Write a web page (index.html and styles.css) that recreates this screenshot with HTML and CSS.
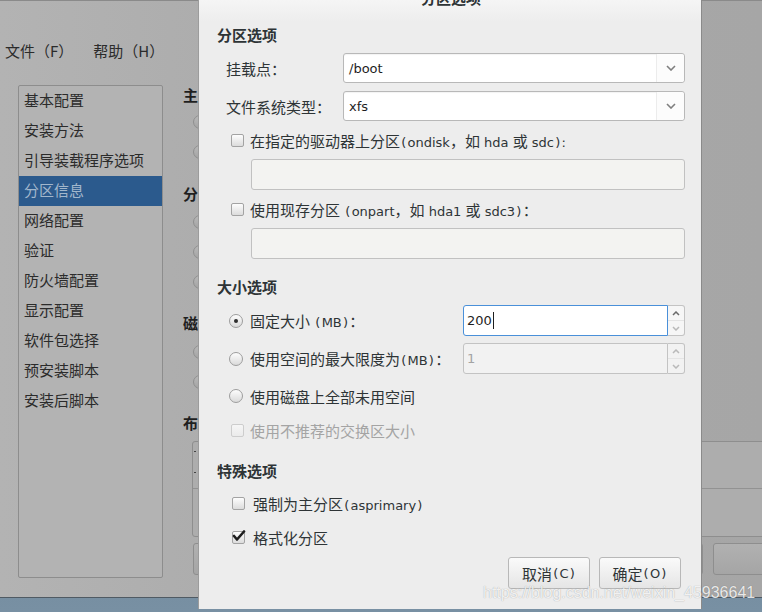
FILE: index.html
```html
<!DOCTYPE html>
<html>
<head>
<meta charset="utf-8">
<link rel="stylesheet" href="styles.css">
</head>
<body>
<div class="screen">
  <div class="win">
    <div class="menubar">
      <span class="zh">文件（F）</span>
      <span class="zh">帮助（H）</span>
    </div>
    <div class="wbody">
      <ul class="side zh">
        <li>基本配置</li>
        <li>安装方法</li>
        <li>引导装载程序选项</li>
        <li class="sel">分区信息</li>
        <li>网络配置</li>
        <li>验证</li>
        <li>防火墙配置</li>
        <li>显示配置</li>
        <li>软件包选择</li>
        <li>预安装脚本</li>
        <li>安装后脚本</li>
      </ul>
      <div class="pane">
        <div class="ph zh">主</div>
        <div class="pr"><span class="bradio"></span></div>
        <div class="pr"><span class="bradio"></span></div>
        <div class="ph zh ph-gap">分区</div>
        <div class="pr pr-first"><span class="bradio"></span></div>
        <div class="pr"><span class="bradio"></span></div>
        <div class="pr"><span class="bradio"></span></div>
        <div class="ph zh ph-gap2">磁</div>
        <div class="pr pr-first2"><span class="bradio"></span></div>
        <div class="pr"><span class="bradio"></span></div>
        <div class="ph zh ph-gap2">布局</div>
        <div class="ptable">
          <div class="prow"><span class="tick1"></span><span class="tick1"></span></div>
          <div class="prow"></div>
        </div>
        <div class="pbtns">
          <span class="pbtn"></span>
          <span class="pbtn"></span>
          <span class="pbtn pbtn-s"></span>
        </div>
      </div>
    </div>
  </div>

  <div class="dialog">
    <div class="dtitle zh">分区选项</div>

    <div class="sec sec-first zh">分区选项</div>
    <div class="frow">
      <span class="flabel zh">挂载点：</span>
      <div class="combo"><span class="val">/boot</span><span class="cbtn"><svg width="10" height="6" viewBox="0 0 10 6"><path d="M1 1 L5 5 L9 1" class="chev"/></svg></span></div>
    </div>
    <div class="frow">
      <span class="flabel zh">文件系统类型：</span>
      <div class="combo"><span class="val">xfs</span><span class="cbtn"><svg width="10" height="6" viewBox="0 0 10 6"><path d="M1 1 L5 5 L9 1" class="chev"/></svg></span></div>
    </div>

    <div class="crow crow-a"><span class="cb"></span><span class="lbl"><span class="zh">在指定的驱动器上分区</span><span class="p">(</span>ondisk<span class="zh">，如</span> hda <span class="zh">或</span> sdc<span class="p">)</span>:</span></div>
    <div class="entry"></div>
    <div class="crow"><span class="cb"></span><span class="lbl"><span class="zh">使用现存分区</span> <span class="p">(</span>onpart<span class="zh">，如</span> hda1 <span class="zh">或</span> sdc3<span class="p">)</span><span class="zh">：</span></span></div>
    <div class="entry"></div>

    <div class="sec sec-gap zh">大小选项</div>
    <div class="rrow rrow-a">
      <div class="rleft"><span class="radio on"></span><span class="lbl"><span class="zh">固定大小</span> <span class="p">(</span>MB<span class="p">)</span><span class="zh">：</span></span></div>
      <div class="spin">
        <div class="sv focus">200<span class="caret"></span></div>
        <div class="sb">
          <span><svg width="8" height="5" viewBox="0 0 8 5"><path d="M1 4 L4 1 L7 4" class="arr dark"/></svg></span>
          <span><svg width="8" height="5" viewBox="0 0 8 5"><path d="M1 1 L4 4 L7 1" class="arr light"/></svg></span>
        </div>
      </div>
    </div>
    <div class="rrow">
      <div class="rleft"><span class="radio"></span><span class="lbl"><span class="zh">使用空间的最大限度为</span><span class="p">(</span>MB<span class="p">)</span><span class="zh">：</span></span></div>
      <div class="spin dis">
        <div class="sv">1</div>
        <div class="sb">
          <span><svg width="8" height="5" viewBox="0 0 8 5"><path d="M1 4 L4 1 L7 4" class="arr light"/></svg></span>
          <span><svg width="8" height="5" viewBox="0 0 8 5"><path d="M1 1 L4 4 L7 1" class="arr light"/></svg></span>
        </div>
      </div>
    </div>
    <div class="rrow2"><span class="radio"></span><span class="zh">使用磁盘上全部未用空间</span></div>
    <div class="crow crow-dis"><span class="cb"></span><span class="zh">使用不推荐的交换区大小</span></div>

    <div class="sec sec-gap2 zh">特殊选项</div>
    <div class="crow crow-s"><span class="cb"></span><span class="lbl"><span class="zh">强制为主分区</span><span class="p">(</span>asprimary<span class="p">)</span></span></div>
    <div class="crow crow-s"><span class="cb checked"><svg width="14" height="12" viewBox="0 0 14 12"><path d="M2 6 L5 9.5 L12 1.5" class="tick"/></svg></span><span class="zh">格式化分区</span></div>

    <div class="btns">
      <span class="btn"><span class="zh">取消</span><span class="p">(</span>C<span class="p">)</span></span>
      <span class="btn"><span class="zh">确定</span><span class="p">(</span>O<span class="p">)</span></span>
    </div>
  </div>

  <div class="watermark">https://blog.csdn.net/weixin_45936641</div>
</div>
</body>
</html>
```

FILE: styles.css
```css
* { box-sizing: border-box; margin: 0; padding: 0; }
html, body { width: 762px; height: 612px; overflow: hidden; }
body {
  font-family: "DejaVu Sans", "Noto Sans CJK SC", sans-serif;
  font-size: 13px;
  color: #2e3436;
  background: #6d8597;
}
.zh { font-family: "Noto Sans CJK SC", sans-serif; font-size: 15px; }
.p { display: inline-block; width: 7.5px; text-align: center; }
.lbl { white-space: nowrap; }

.screen {
  position: relative;
  width: 762px;
  height: 612px;
  background: linear-gradient(#56697a, #7890a3);
  overflow: hidden;
}

/* background (dimmed) window */
.win {
  height: 598px;
  border-top: 1px solid #8a8a8a;
  border-bottom: 1px solid #4f5a63;
  background: linear-gradient(to right, #b3b3b3, #a9a9a9 45%, #a6a6a6);
  overflow: hidden;
  color: #2b2b2b;
}
.menubar {
  height: 84px;
  padding: 35px 0 0 5px;
  display: flex;
  gap: 20px;
  line-height: 30px;
  color: #2b2b2b;
}
.wbody { display: flex; height: 512px; }
.side {
  margin-left: 18px;
  width: 145px;
  height: 493px;
  flex: none;
  border: 1px solid #8d8d8d;
  border-radius: 2px;
  background: #b3b3b3;
  list-style: none;
}
.side li { height: 30px; line-height: 28px; padding-left: 5px; color: #2b2b2b; }
.side li.sel { background: #2b5a8d; color: #a2b7cc; }

.pane { margin-left: 20px; width: 640px; flex: none; }
.ph { height: 20px; line-height: 20px; font-weight: bold; color: #1f1f1f; }
.ph-gap { margin-top: 17px; }
.ph-gap2 { margin-top: 16px; }
.pr { height: 30px; display: flex; align-items: center; gap: 7px; padding-left: 10px; }
.ph + .pr { margin-top: 2px; }
.pr-first { margin-top: 3px !important; }
.pr-first2 { margin-top: 4px !important; }
.bradio {
  width: 14px; height: 14px; border-radius: 50%;
  border: 1px solid #8f8f8f;
  background: linear-gradient(#b8b8b8, #a4a4a4);
}
.ptable {
  margin-top: 8px;
  margin-left: 9px;
  width: 620px;
  height: 96px;
  border: 1px solid #8e8e8e;
  border-radius: 3px;
  background: #adadad;
}
.prow { height: 47px; padding: 9px 0 0 1px; display: flex; flex-direction: column; gap: 20px; }
.prow:first-child { border-bottom: 1px solid #929292; }
.tick1 { width: 2px; height: 1px; background: #444; }
.pbtns { display: flex; gap: 10px; margin-top: 6px; margin-left: 10px; }
.pbtn {
  width: 250px; height: 32px;
  border: 1px solid #8e8e8e; border-radius: 3px;
  background: linear-gradient(#b1b1b1, #a5a5a5);
}
.pbtn-s { width: 100px; }

/* dialog */
.dialog {
  position: absolute;
  left: 198px;
  top: 0;
  width: 504px;
  height: 609px;
  border-left: 1px solid #9c9c9c;
  border-right: 1px solid #8a8a8a;
  background: linear-gradient(#f5f5f5, #ededed 22px);
  padding: 0 16px 0 18px;
  display: flex;
  flex-direction: column;
  color: #2e3436;
}
.dtitle {
  height: 20px; line-height: 20px; margin-top: -12px;
  text-align: center; font-weight: bold; color: #2e3436;
}
.sec { height: 20px; line-height: 20px; font-weight: bold; color: #2e3436; }
.sec-first { margin-top: 17px; }
.sec-gap { margin-top: 18px; }
.sec-gap2 { margin-top: 19px; }

.frow { display: flex; align-items: center; height: 30px; margin-top: 8px; }
.flabel { width: 126px; flex: none; padding-left: 9px; }
.combo {
  flex: 1; height: 30px; display: flex;
  border: 1px solid #b8b8b8; border-radius: 3px;
  background: #fff;
  box-shadow: inset 0 1px 1px rgba(0,0,0,0.05);
}
.combo .val { flex: 1; padding-left: 5px; line-height: 30px; color: #1e1e1e; }
.cbtn {
  width: 28px; flex: none;
  border-left: 1px solid #ececec;
  background: #fcfcfc;
  border-radius: 0 3px 3px 0;
  display: flex; align-items: center; justify-content: center;
}
.chev { fill: none; stroke: #7f7f7f; stroke-width: 1.6; }

.crow { height: 24px; display: flex; align-items: center; gap: 6px; margin-left: 14px; margin-top: 7px; }
.cb {
  width: 13px; height: 13px; flex: none;
  border: 1px solid #a3a3a3; border-radius: 2px;
  background: linear-gradient(#fdfdfd, #dcdcdc);
  position: relative;
}
.cb.checked svg { position: absolute; left: -1px; top: -2px; }
.tick { fill: none; stroke: #1e1e1e; stroke-width: 2.6; stroke-linecap: round; stroke-linejoin: round; }
.crow-dis { margin-top: 10px; color: #a4a4a4; }
.crow-dis .cb { border-color: #cdcdcd; background: linear-gradient(#f6f6f6, #ebebeb); }
.crow-s { margin-top: 10px; margin-left: 15px; gap: 8px; }

.entry {
  margin-left: 34px; margin-top: 7px; height: 31px; flex: none;
  border: 1px solid #c1c1c1; border-radius: 3px;
  background: #f3f3f1;
}

.rrow { display: flex; align-items: center; height: 31px; margin-top: 7px; }
.rrow-a { margin-top: 8px; }
.rleft { width: 246px; flex: none; display: flex; align-items: center; gap: 7px; padding-left: 12px; }
.radio {
  width: 14px; height: 14px; flex: none; border-radius: 50%;
  border: 1px solid #9d9d9d;
  background: linear-gradient(#fdfdfd, #dadada);
  display: flex; align-items: center; justify-content: center;
}
.radio.on::after { content: ""; width: 4px; height: 4px; border-radius: 50%; background: #2e2e2e; }
.rrow2 { display: flex; align-items: center; gap: 7px; height: 24px; margin-top: 10px; padding-left: 12px; }

.spin { flex: 1; height: 31px; display: flex; }
.sv {
  flex: 1; padding-left: 3px; line-height: 29px;
  border: 1px solid #c3c3c3; border-radius: 3px 0 0 3px;
  background: #fff; color: #1e1e1e;
  display: flex; align-items: center;
}
.sv.focus { border-color: #4a90d9; }
.caret { display: inline-block; width: 1px; height: 17px; background: #1e1e1e; margin-left: 1px; }
.sb {
  width: 17px; flex: none; display: flex; flex-direction: column;
  border: 1px solid #c3c3c3; border-left: none; border-radius: 0 3px 3px 0;
  background: #f6f6f6;
}
.sb span { flex: 1; display: flex; align-items: center; justify-content: center; }
.sb span + span { border-top: 1px solid #e4e4e4; }
.arr { fill: none; stroke-width: 1.5; }
.arr.dark { stroke: #6a6a6a; }
.arr.light { stroke: #b9b9b9; }
.spin.dis .sv { background: #f2f2f2; color: #a3a3a3; }
.spin.dis .sb { background: #f2f2f2; }

.btns { display: flex; justify-content: flex-end; gap: 9px; margin-top: 8px; margin-right: 4px; }
.btn {
  width: 82px; height: 32px;
  border: 1px solid #b8b8b8; border-radius: 3px;
  background: linear-gradient(#fafafa, #e5e5e5);
  display: flex; align-items: center; justify-content: center;
  color: #2e3436;
}

.watermark {
  position: absolute;
  left: 483px;
  top: 583px;
  font-family: "Liberation Sans", Arial, sans-serif;
  font-size: 16px;
  line-height: 20px;
  color: rgba(255, 255, 255, 0.85);
  text-shadow: 0 0 1px rgba(0, 0, 0, 0.35);
  white-space: nowrap;
}
```
